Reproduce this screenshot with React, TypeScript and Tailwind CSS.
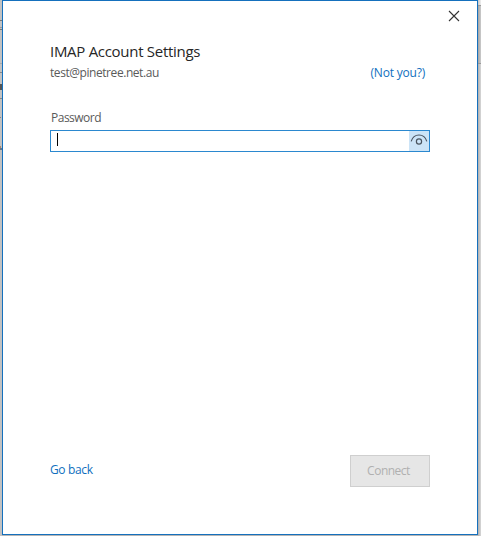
import { useState } from "react";

function CloseIcon() {
  return (
    <svg width="12" height="12" viewBox="0 0 12 12" fill="none" stroke="#333333" strokeWidth="1.1">
      <path d="M1 1 L11 11 M11 1 L1 11" />
    </svg>
  );
}

function RevealIcon() {
  return (
    <svg width="18" height="14" viewBox="0 0 18 14" fill="none" stroke="#4b5560" strokeWidth="1.2">
      <path d="M1.2 8.3 C2.5 4 5.5 2 9 2 C12.5 2 15.5 4 16.8 8.3" />
      <circle cx="9" cy="8.5" r="2.6" />
    </svg>
  );
}

function LeftBackdrop() {
  return (
    <div className="flex h-[536px] w-[2px] flex-col overflow-hidden bg-[#c2c2c2]">
      <div className="mt-[20px] h-px shrink-0 bg-[#777777]" />
      <div className="mt-[6px] h-px shrink-0 bg-[#999999]" />
      <div className="mt-px h-px shrink-0 bg-[#777777]" />
      <div className="mt-[33px] h-px shrink-0 bg-[#aaaaaa]" />
      <div className="mt-[8px] h-px shrink-0 bg-[#888888]" />
      <div className="mt-[11px] h-[6px] shrink-0 bg-[#555555]" />
      <div className="mt-[8px] h-px shrink-0 bg-[#888888]" />
      <div className="mt-[18px] h-px w-px shrink-0 bg-[#888888]" />
      <div className="mt-[28px] h-[2px] w-px shrink-0 bg-[#a8886e]" />
      <div className="h-[2px] shrink-0 bg-[#66778c]" />
    </div>
  );
}

function RightBackdrop() {
  return (
    <div className="flex h-[536px] w-[3px] flex-col">
      <div className="h-[5px] bg-gradient-to-r from-[#c8c8c8] to-[#f0f0f0]" />
      <div className="h-px bg-[#999999]" />
      <div className="h-[57px] bg-gradient-to-r from-[#a4a4a4] to-[#cccccc]" />
      <div className="h-px bg-[#999999]" />
      <div className="grow bg-gradient-to-r from-[#b0b0b0] to-[#d8d8d8]" />
    </div>
  );
}

export default function App() {
  const [password, setPassword] = useState("");
  return (
    <div className="flex h-[536px] w-[481px] overflow-hidden bg-[#b5b5b5] font-['Open_Sans','Noto_Sans',sans-serif]">
      <LeftBackdrop />
      <main className="flex h-[535px] w-[476px] flex-col border border-[#1570bd] bg-white">
        <div className="flex h-[38px] shrink-0 justify-end pt-[9px] pr-[17px]">
          <button aria-label="Close" className="size-3">
            <CloseIcon />
          </button>
        </div>
        <div className="flex grow flex-col px-[47px]">
          <h1 className="h-[25px] text-[15px] leading-[24px] tracking-[-0.29px] whitespace-nowrap text-[#262626]">
            IMAP Account Settings
          </h1>
          <div className="flex h-[18px] items-center justify-between pr-[5px] text-[12px] leading-[18px]">
            <span className="tracking-[-0.44px] text-[#5a5a5a]">test@pinetree.net.au</span>
            <a className="font-medium tracking-[-0.2px] text-[#0f6fbe]">(Not you?)</a>
          </div>
          <label className="mt-[27px] h-[18px] pl-px text-[12px] leading-[18px] tracking-[-0.5px] text-[#5a5a5a]">
            Password
          </label>
          <div className="mt-[3px] flex h-[22px] w-[380px] border border-[#2b88cf]">
            <div className="flex grow items-center pl-[6px]">
              <span className="mb-[3px] h-[13px] w-px bg-black" />
              <input
                type="password"
                aria-label="Password"
                value={password}
                onChange={(event) => setPassword(event.target.value)}
                className="h-full grow bg-transparent text-[12px] caret-transparent outline-none"
              />
            </div>
            <button aria-label="Show password" className="flex w-[20px] items-start justify-center bg-[#cce4f7] pt-[2px]">
              <RevealIcon />
            </button>
          </div>
          <div className="mt-auto mb-[47px] flex h-[32px] w-[380px] items-center justify-between text-[12px]">
            <a className="mb-[2px] font-medium tracking-[-0.35px] text-[#0f6fbe]">Go back</a>
            <button
              disabled
              className="flex h-[32px] w-[80px] items-center justify-center border border-[#cfcfcf] bg-[#e6e6e6] pr-[3px] font-medium tracking-[-0.5px] text-[#b0b0b0]"
            >
              Connect
            </button>
          </div>
        </div>
      </main>
      <RightBackdrop />
    </div>
  );
}
